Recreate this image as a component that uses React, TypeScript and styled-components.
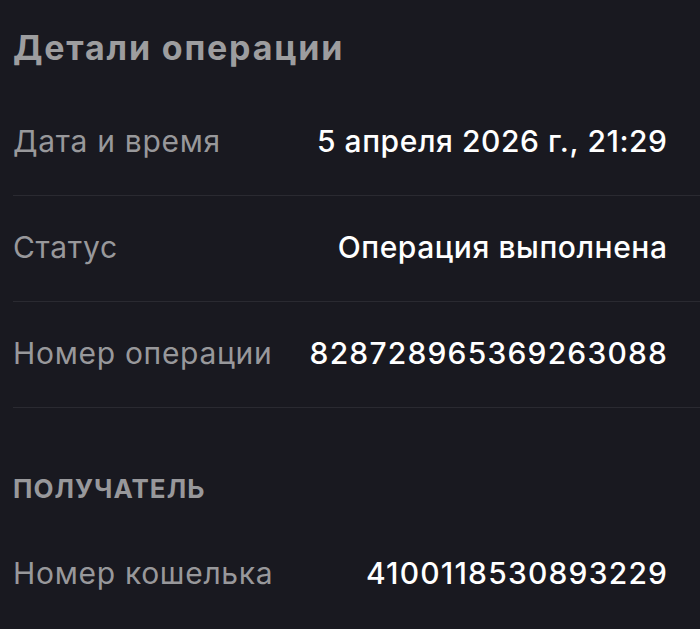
import React from "react";
import styled, { createGlobalStyle } from "styled-components";

const Global = createGlobalStyle`
  html, body { margin: 0; padding: 0; background: #191920; }
  body { font-family: Inter, "Noto Sans", sans-serif; -webkit-font-smoothing: antialiased; }
`;

const Page = styled.div`
  background: #191920;
  min-height: 629px;
  padding-left: 13px;
  box-sizing: border-box;
`;

const Title = styled.h1`
  margin: 0;
  height: 90px;
  display: flex;
  align-items: center;
  padding-top: 5px;
  box-sizing: border-box;
  font-size: 34px;
  font-weight: 700;
  color: #9d9d9f;
  letter-spacing: 1.8px;
`;

const Row = styled.div<{ $divider?: boolean }>`
  height: 106px;
  display: flex;
  align-items: center;
  justify-content: space-between;
  padding-right: 33px;
  padding-bottom: 4px;
  box-sizing: border-box;
  border-bottom: ${(p) => (p.$divider ? "1px solid #2a2a31" : "none")};
`;

const Label = styled.span`
  font-size: 30px;
  font-weight: 400;
  color: #98989b;
  letter-spacing: 0.7px;
`;

const Value = styled.span<{ $numeric?: boolean }>`
  font-size: 30px;
  font-weight: 500;
  color: #ffffff;
  text-align: right;
  letter-spacing: ${(p) => (p.$numeric ? "1.2px" : "0.55px")};
  margin-right: ${(p) => (p.$numeric ? "-1.2px" : "-0.55px")};
`;

const SectionHeader = styled.div`
  height: 114px;
  display: flex;
  align-items: flex-end;
  padding-bottom: 18px;
  box-sizing: border-box;
  font-size: 26px;
  font-weight: 700;
  color: #98989b;
  letter-spacing: 1px;
  text-transform: uppercase;
`;

const rows = [
  { label: "Дата и время", value: "5 апреля 2026 г., 21:29", numeric: false },
  { label: "Статус", value: "Операция выполнена", numeric: false },
  { label: "Номер операции", value: "828728965369263088", numeric: true },
];

export default function App() {
  return (
    <>
      <Global />
      <Page>
        <Title>Детали операции</Title>
        {rows.map((r) => (
          <Row key={r.label} $divider>
            <Label>{r.label}</Label>
            <Value $numeric={r.numeric}>{r.value}</Value>
          </Row>
        ))}
        <SectionHeader>Получатель</SectionHeader>
        <Row>
          <Label>Номер кошелька</Label>
          <Value $numeric>4100118530893229</Value>
        </Row>
      </Page>
    </>
  );
}
